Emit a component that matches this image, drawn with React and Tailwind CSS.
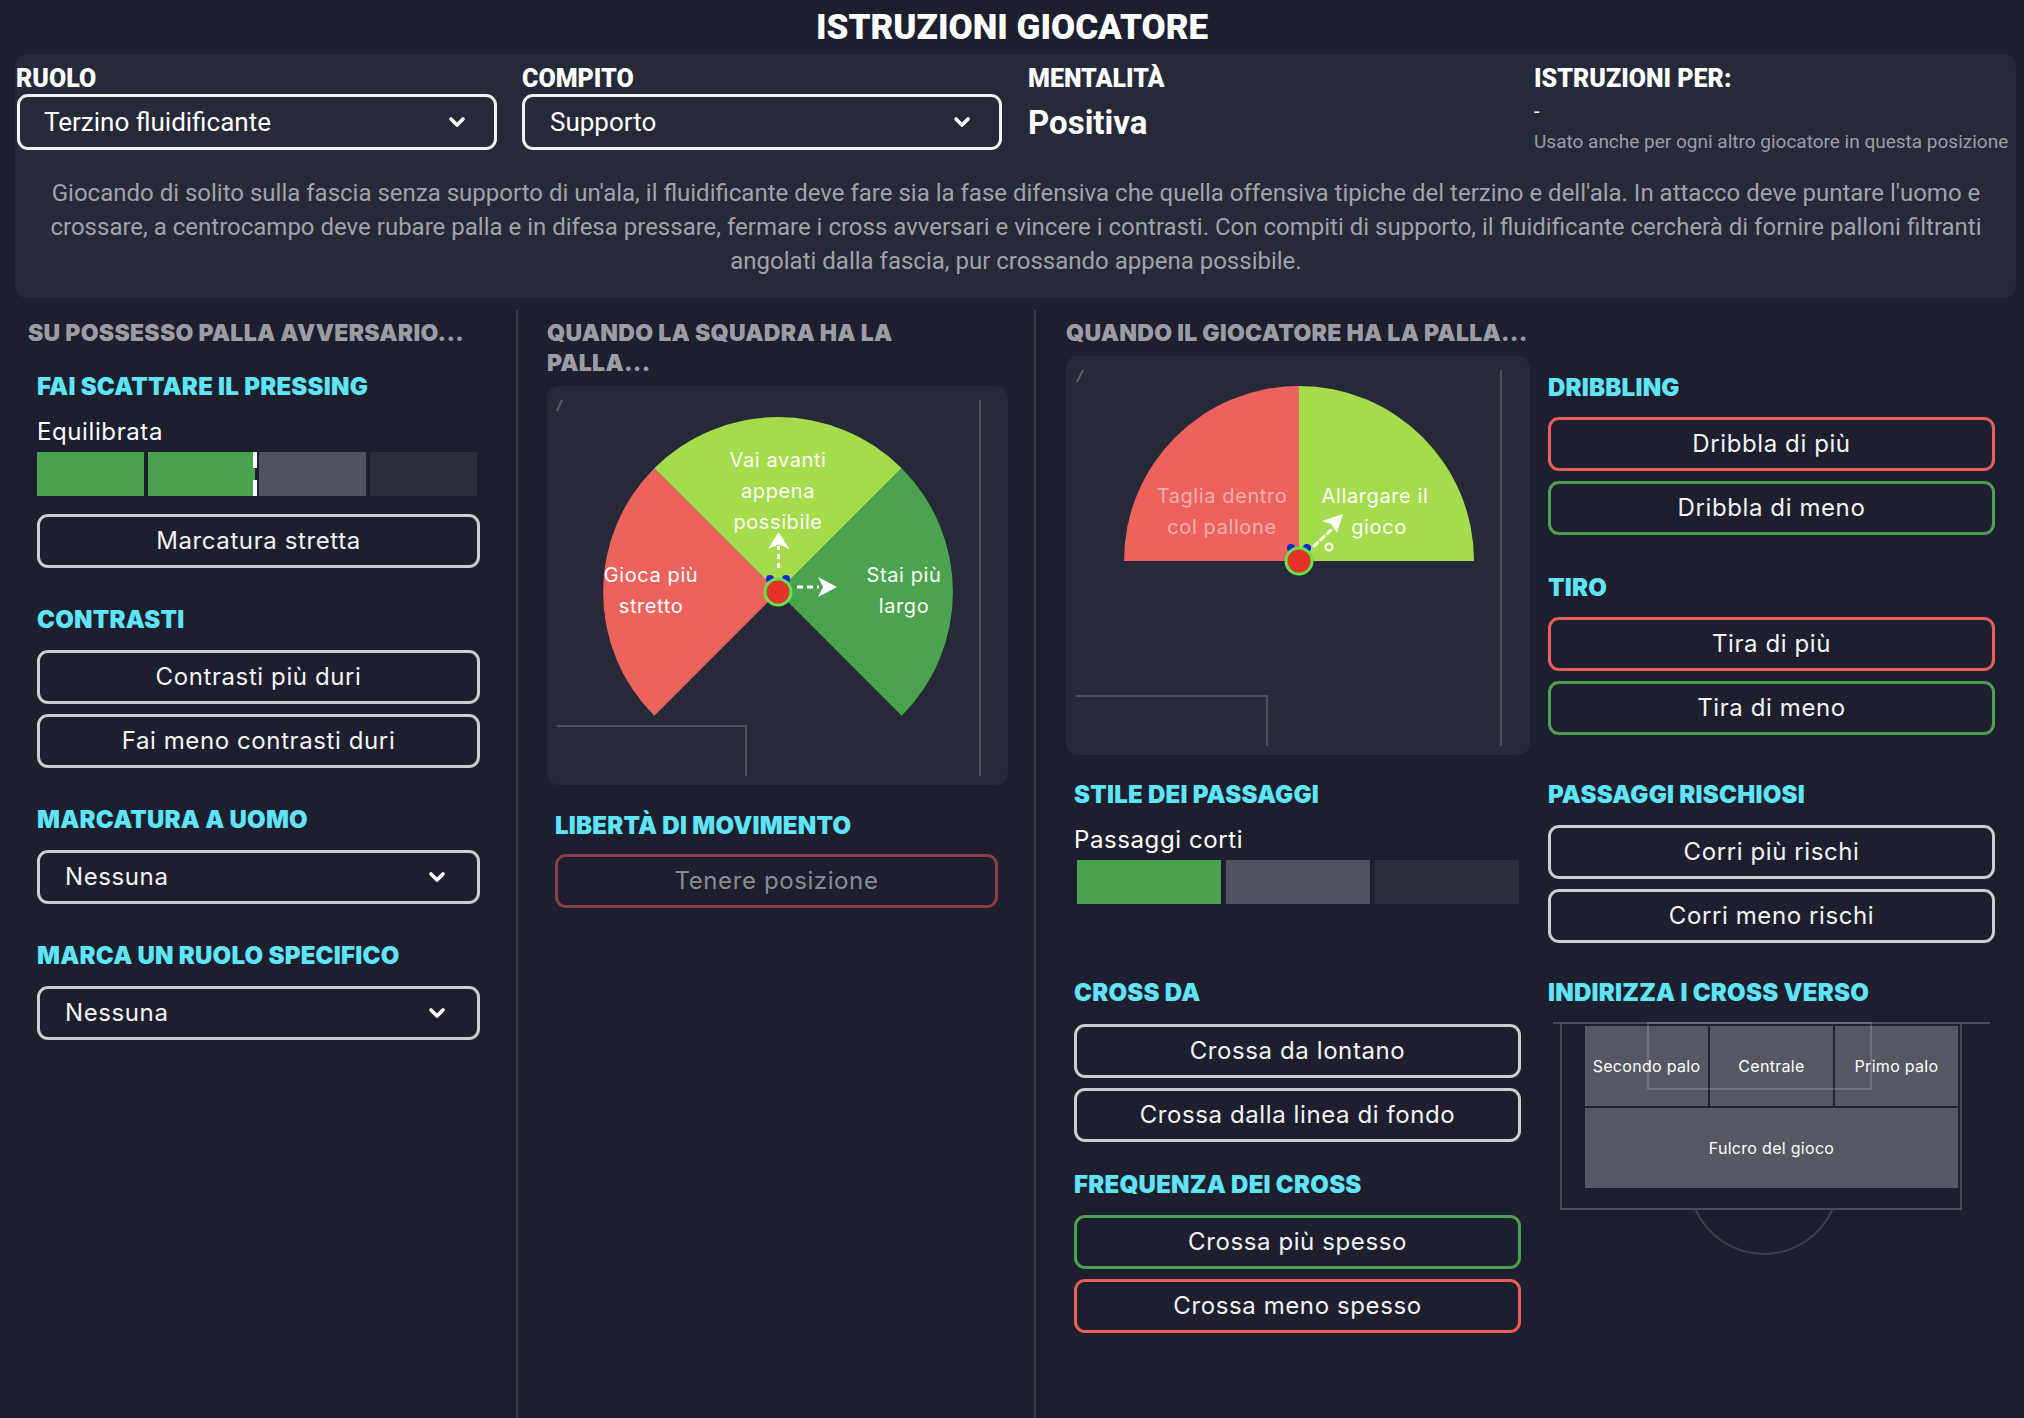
import React from "react";

const Chevron = ({ className = "" }) => (
  <svg width="18" height="12" viewBox="0 0 18 12" className={className}>
    <polyline points="3,3 9,9 15,3" fill="none" stroke="#ffffff" strokeWidth="3.6" strokeLinecap="round" strokeLinejoin="round" />
  </svg>
);

const Cyan = ({ children, className = "" }) => (
  <div className={`text-[24px] leading-[28px] font-black tracking-[0.01em] text-[#5fe5f7] whitespace-nowrap ${className}`}>{children}</div>
);

const Gray = ({ children, className = "" }) => (
  <div className={`text-[23px] leading-[30px] font-black tracking-[0.012em] text-[#9c9da4] whitespace-nowrap ${className}`}>{children}</div>
);

const Btn = ({ children, tone = "white", className = "" }) => {
  const border =
    tone === "red"
      ? "border-[#e9605b]"
      : tone === "green"
      ? "border-[#4ca151]"
      : tone === "muted"
      ? "border-[#8a3d43]"
      : "border-[#cdcdcd]";
  const text = tone === "muted" ? "text-[#8b8c93]" : "text-[#f4f4f4]";
  return (
    <div className={`h-[54px] rounded-[11px] border-[3px] ${border} flex items-center justify-center text-[24px] tracking-[0.025em] ${text} ${className}`}>
      {children}
    </div>
  );
};

const Select = ({ children, className = "" }) => (
  <div className={`h-[54px] rounded-[11px] border-[3px] border-[#cdcdcd] flex items-center justify-between pl-[25px] pr-[31px] text-[24px] tracking-[0.025em] text-[#f4f4f4] ${className}`}>
    <span>{children}</span>
    <Chevron />
  </div>
);

const Bar = ({ segs, w, h = 44, gap = 4, marker }) => (
  <div className="relative flex" style={{ gap: gap }}>
    {segs.map((c, i) => (
      <div key={i} style={{ width: w, height: h, background: c }} />
    ))}
    {marker !== undefined && (
      <>
        <div className="absolute top-0 w-[4px] h-[16px] bg-white" style={{ left: marker }} />
        <div className="absolute bottom-0 w-[4px] h-[16px] bg-white" style={{ left: marker }} />
      </>
    )}
  </div>
);

const LINE = "#4d505c";

const TeamPitch = () => (
  <svg width="461" height="399" className="block">
    <line x1="10" y1="25" x2="15" y2="14" stroke="#5a5d68" strokeWidth="2" />
    <line x1="433" y1="14" x2="433" y2="390" stroke={LINE} strokeWidth="2" />
    <polyline points="10,340 199,340 199,390" fill="none" stroke={LINE} strokeWidth="2" />
    <path d="M231 206 L107.3 82.3 A175 175 0 0 0 107.3 329.7 Z" fill="#ec625d" />
    <path d="M231 206 L107.3 82.3 A175 175 0 0 1 354.7 82.3 Z" fill="#a5dc4b" />
    <path d="M231 206 L354.7 82.3 A175 175 0 0 1 354.7 329.7 Z" fill="#4ba350" />
    <g fontFamily="Inter, sans-serif" fontSize="20" fill="#ffffff" textAnchor="middle" letterSpacing="0.6">
      <text x="231" y="81">Vai avanti</text>
      <text x="231" y="112">appena</text>
      <text x="231" y="143">possibile</text>
      <text x="104" y="196">Gioca più</text>
      <text x="104" y="227">stretto</text>
      <text x="357" y="196">Stai più</text>
      <text x="357" y="227">largo</text>
    </g>
    <line x1="231.5" y1="182" x2="231.5" y2="160" stroke="#ffffff" strokeWidth="3" strokeDasharray="5 4" />
    <polygon points="231.5,146 242.5,163 232,158.5 221,163" fill="#ffffff" />
    <line x1="250" y1="201" x2="272" y2="201" stroke="#ffffff" strokeWidth="3" strokeDasharray="6 4" />
    <polygon points="290,201 271,191 276,201 271,211" fill="#ffffff" />
    <circle cx="223" cy="193" r="4" fill="#1a22d6" />
    <circle cx="239" cy="193" r="4" fill="#1a22d6" />
    <circle cx="231" cy="206" r="13" fill="#e53328" stroke="#5de84b" strokeWidth="3" />
  </svg>
);

const PlayerPitch = () => (
  <svg width="464" height="399" className="block">
    <line x1="11" y1="26" x2="17" y2="14" stroke="#5a5d68" strokeWidth="2" />
    <line x1="435" y1="14" x2="435" y2="390" stroke={LINE} strokeWidth="2" />
    <polyline points="10,340 201,340 201,390" fill="none" stroke={LINE} strokeWidth="2" />
    <path d="M233 205 L58 205 A175 175 0 0 1 233 30 Z" fill="#ec625d" />
    <path d="M233 205 L233 30 A175 175 0 0 1 408 205 Z" fill="#a5dc4b" />
    <g fontFamily="Inter, sans-serif" fontSize="20" textAnchor="middle" letterSpacing="0.6">
      <text x="156" y="147" fill="#ffffff" fillOpacity="0.5">Taglia dentro</text>
      <text x="156" y="178" fill="#ffffff" fillOpacity="0.5">col pallone</text>
      <text x="309" y="147" fill="#ffffff">Allargare il</text>
      <text x="313" y="178" fill="#ffffff">gioco</text>
    </g>
    <line x1="248" y1="190" x2="265" y2="174" stroke="#ffffff" strokeWidth="3" strokeDasharray="5 4" strokeLinecap="round" />
    <polygon points="277,158 256,165 265,168 271,177" fill="#ffffff" />
    <circle cx="263" cy="191" r="3.5" fill="none" stroke="#ffffff" strokeWidth="2" />
    <circle cx="225" cy="192" r="4" fill="#1a22d6" />
    <circle cx="241" cy="192" r="4" fill="#1a22d6" />
    <circle cx="233" cy="205" r="13" fill="#e53328" stroke="#5de84b" strokeWidth="3" />
  </svg>
);

const CrossTarget = () => (
  <svg width="447" height="250" className="block">
    <path d="M147.3 194 A75 75 0 0 0 284.7 194" fill="none" stroke="#3d404c" strokeWidth="2" />
    <line x1="5" y1="8" x2="442" y2="8" stroke="#4a4d59" strokeWidth="2" />
    <polyline points="13,8 13,194 413,194 413,8" fill="none" stroke="#4a4d59" strokeWidth="2" />
    <rect x="37" y="11" width="123" height="80" fill="#555862" />
    <rect x="162" y="11" width="123" height="80" fill="#555862" />
    <rect x="287" y="11" width="123" height="80" fill="#555862" />
    <rect x="37" y="93" width="373" height="80" fill="#555862" />
    <rect x="100" y="8" width="223" height="66" fill="none" stroke="#ffffff" strokeOpacity="0.16" strokeWidth="2" />
    <g fontFamily="Inter, sans-serif" fontSize="16" fill="#ffffff" textAnchor="middle" letterSpacing="0.3">
      <text x="98.5" y="57">Secondo palo</text>
      <text x="223.5" y="57">Centrale</text>
      <text x="348.5" y="57">Primo palo</text>
      <text x="223.5" y="139">Fulcro del gioco</text>
    </g>
  </svg>
);

export default function App() {
  return (
    <div className="w-[2024px] h-[1418px] bg-[#1d1f2e] overflow-hidden font-['Inter',sans-serif] text-white">
      {/* Title */}
      <div className="h-[56px] flex items-center justify-center font-['Roboto',sans-serif] text-[35px] font-black text-white">
        ISTRUZIONI GIOCATORE
      </div>

      {/* Header panel */}
      <div className="-mt-[2px] ml-[15px] w-[2001px] h-[244px] rounded-[12px] bg-[#262937] pt-[12px] pl-[1px] font-['Roboto',sans-serif]">
        <div className="flex">
          <div className="w-[506px] shrink-0">
            <div className="text-[25px] leading-[26px] font-black">RUOLO</div>
            <div className="mt-[2px] w-[480px] h-[56px] ml-[1px] rounded-[11px] border-[3px] border-[#f2f2f2] flex items-center justify-between pl-[24px] pr-[28px] text-[26px] text-white">
              <span>Terzino fluidificante</span>
              <Chevron />
            </div>
          </div>
          <div className="w-[506px] shrink-0">
            <div className="text-[25px] leading-[26px] font-black">COMPITO</div>
            <div className="mt-[2px] w-[480px] h-[56px] rounded-[11px] border-[3px] border-[#f2f2f2] flex items-center justify-between pl-[25px] pr-[28px] text-[26px] text-white">
              <span>Supporto</span>
              <Chevron />
            </div>
          </div>
          <div className="w-[506px] shrink-0">
            <div className="text-[25px] leading-[26px] font-black">MENTALITÀ</div>
            <div className="mt-[11px] text-[33px] leading-[40px] font-bold">Positiva</div>
          </div>
          <div className="flex-1 min-w-0">
            <div className="text-[25px] leading-[26px] font-black">ISTRUZIONI PER:</div>
            <div className="mt-[8px] text-[20px] leading-[22px]">-</div>
            <div className="mt-[8px] text-[19px] leading-[24px] text-[#9c9ea6] whitespace-nowrap">Usato anche per ogni altro giocatore in questa posizione</div>
          </div>
        </div>
        <div className="mt-[22px] text-center text-[24px] leading-[34px] text-[#a1a3ab] whitespace-nowrap">
          Giocando di solito sulla fascia senza supporto di un'ala, il fluidificante deve fare sia la fase difensiva che quella offensiva tipiche del terzino e dell'ala. In attacco deve puntare l'uomo e
          <br />
          crossare, a centrocampo deve rubare palla e in difesa pressare, fermare i cross avversari e vincere i contrasti. Con compiti di supporto, il fluidificante cercherà di fornire palloni filtranti
          <br />
          angolati dalla fascia, pur crossando appena possibile.
        </div>
      </div>

      {/* Lower section */}
      <div className="mt-[12px] pl-[15px] flex h-[1108px]">
        {/* Column 1 */}
        <div className="w-[503px] h-full border-r-2 border-[#363946] pl-[13px] pt-[8px]">
          <Gray>SU POSSESSO PALLA AVVERSARIO...</Gray>
          <div className="pl-[9px] w-[452px]">
            <Cyan className="mt-[25px]">FAI SCATTARE IL PRESSING</Cyan>
            <div className="mt-[16px] text-[24px] leading-[30px] tracking-[0.025em]">Equilibrata</div>
            <div className="mt-[5px]">
              <Bar segs={["#4aa251", "#4aa251", "#50535e", "#2c2e3b"]} w={107} gap={4} marker={216} />
            </div>
            <Btn className="mt-[18px] w-[443px]">Marcatura stretta</Btn>

            <Cyan className="mt-[38px]">CONTRASTI</Cyan>
            <Btn className="mt-[16px] w-[443px]">Contrasti più duri</Btn>
            <Btn className="mt-[10px] w-[443px]">Fai meno contrasti duri</Btn>

            <Cyan className="mt-[38px]">MARCATURA A UOMO</Cyan>
            <Select className="mt-[16px] w-[443px]">Nessuna</Select>

            <Cyan className="mt-[38px]">MARCA UN RUOLO SPECIFICO</Cyan>
            <Select className="mt-[16px] w-[443px]">Nessuna</Select>
          </div>
        </div>

        {/* Column 2 */}
        <div className="w-[518px] h-full border-r-2 border-[#363946] pl-[29px] pt-[8px]">
          <Gray>
            QUANDO LA SQUADRA HA LA
            <br />
            PALLA...
          </Gray>
          <div className="mt-[8px] w-[461px] h-[399px] rounded-[12px] bg-[#262937]">
            <TeamPitch />
          </div>
          <div className="pl-[8px]">
            <Cyan className="mt-[27px]">LIBERTÀ DI MOVIMENTO</Cyan>
            <Btn tone="muted" className="mt-[14px] w-[443px]">Tenere posizione</Btn>
          </div>
        </div>

        {/* Column 3 */}
        <div className="flex-1 h-full pl-[30px] flex gap-[18px]">
          <div className="w-[464px] pt-[8px]">
            <Gray>QUANDO IL GIOCATORE HA LA PALLA...</Gray>
            <div className="mt-[8px] w-[464px] h-[399px] rounded-[12px] bg-[#262937]">
              <PlayerPitch />
            </div>
            <div className="pl-[8px]">
              <Cyan className="mt-[26px]">STILE DEI PASSAGGI</Cyan>
              <div className="mt-[16px] text-[24px] leading-[30px] tracking-[0.025em]">Passaggi corti</div>
              <div className="mt-[5px] ml-[3px]">
                <Bar segs={["#4aa251", "#50535e", "#2c2e3b"]} w={144} gap={5} />
              </div>
              <Cyan className="mt-[75px]">CROSS DA</Cyan>
              <Btn className="mt-[17px] w-[447px]">Crossa da lontano</Btn>
              <Btn className="mt-[10px] w-[447px]">Crossa dalla linea di fondo</Btn>
              <Cyan className="mt-[29px]">FREQUENZA DEI CROSS</Cyan>
              <Btn tone="green" className="mt-[16px] w-[447px]">Crossa più spesso</Btn>
              <Btn tone="red" className="mt-[10px] w-[447px]">Crossa meno spesso</Btn>
            </div>
          </div>
          <div className="w-[447px] pt-[64px]">
            <Cyan>DRIBBLING</Cyan>
            <Btn tone="red" className="mt-[15px]">Dribbla di più</Btn>
            <Btn tone="green" className="mt-[10px]">Dribbla di meno</Btn>
            <Cyan className="mt-[39px]">TIRO</Cyan>
            <Btn tone="red" className="mt-[15px]">Tira di più</Btn>
            <Btn tone="green" className="mt-[10px]">Tira di meno</Btn>
            <Cyan className="mt-[46px]">PASSAGGI RISCHIOSI</Cyan>
            <Btn className="mt-[16px]">Corri più rischi</Btn>
            <Btn className="mt-[10px]">Corri meno rischi</Btn>
            <Cyan className="mt-[36px]">INDIRIZZA I CROSS VERSO</Cyan>
            <div className="mt-[8px]">
              <CrossTarget />
            </div>
          </div>
        </div>
      </div>
    </div>
  );
}
